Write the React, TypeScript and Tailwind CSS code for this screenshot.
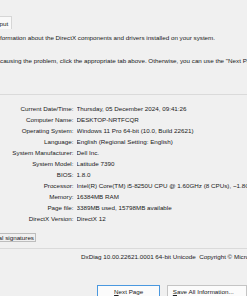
import React from "react";

const rows: [string, string][] = [
  ["Current Date/Time:", "Thursday, 05 December 2024, 09:41:26"],
  ["Computer Name:", "DESKTOP-NRTFCQR"],
  ["Operating System:", "Windows 11 Pro 64-bit (10.0, Build 22621)"],
  ["Language:", "English (Regional Setting: English)"],
  ["System Manufacturer:", "Dell Inc."],
  ["System Model:", "Latitude 7390"],
  ["BIOS:", "1.8.0"],
  ["Processor:", "Intel(R) Core(TM) i5-8250U CPU @ 1.60GHz (8 CPUs), ~1.8GHz"],
  ["Memory:", "16384MB RAM"],
  ["Page file:", "3389MB used, 15798MB available"],
  ["DirectX Version:", "DirectX 12"],
];

export default function App() {
  return (
    <div className="w-[247px] h-[296px] overflow-hidden bg-[#f0f0f0] text-[#202020] font-['Liberation_Sans',Arial,sans-serif] text-[6.25px] leading-[11px] whitespace-nowrap">
      <div className="h-[16px]" />
      <div className="w-[12px] h-[13px] border-t border-r border-[#d6d6d6] bg-[#f9f9f9] flex items-start pt-[1px] overflow-hidden">
        <span className="-ml-[0.5px]">put</span>
      </div>
      <div className="mt-[3px] overflow-hidden">formation about the DirectX components and drivers installed on your system.</div>
      <div className="mt-[12px] overflow-hidden">
        causing the problem, click the appropriate tab above. Otherwise, you can use the "Next Page" button below to visit each page in sequence.
      </div>
      <div className="mt-[28px] h-[1px] bg-[#dadada]" />
      <div className="mt-[7.5px] flex flex-col">
        {rows.map(([k, v]) => (
          <div key={k} className="grid grid-cols-[73.5px_1fr] gap-x-[3px] h-[11px] items-center">
            <div className="text-right">{k}</div>
            <div className="overflow-hidden">{v}</div>
          </div>
        ))}
      </div>
      <div className="mt-[9.5px] w-[36px] h-[9px] border border-l-0 border-[#bdbdbd] flex items-center justify-end pr-[1px] overflow-hidden leading-[8px]">
        <span>al signatures</span>
      </div>
      <div className="mt-[6px] h-[1px] bg-[#dadada]" />
      <div className="mt-[1.5px] pl-[81px]">DxDiag 10.00.22621.0001 64-bit Unicode&nbsp; Copyright © Microsoft. All rights reserved.</div>
      <div className="mt-[23.5px] flex pl-[97px] gap-[7px]">
        <div className="w-[72px] h-[14px] border border-[#4a98df] bg-[#fbfbfb] flex items-center justify-center pb-[1px]">
          <span>
            <u>N</u>ext Page
          </span>
        </div>
        <div className="w-[90px] h-[14px] border border-[#c4c4c4] bg-[#fbfbfb] flex items-center pl-[4.5px] pb-[1px]">
          <span>
            <u>S</u>ave All Information...
          </span>
        </div>
      </div>
    </div>
  );
}
